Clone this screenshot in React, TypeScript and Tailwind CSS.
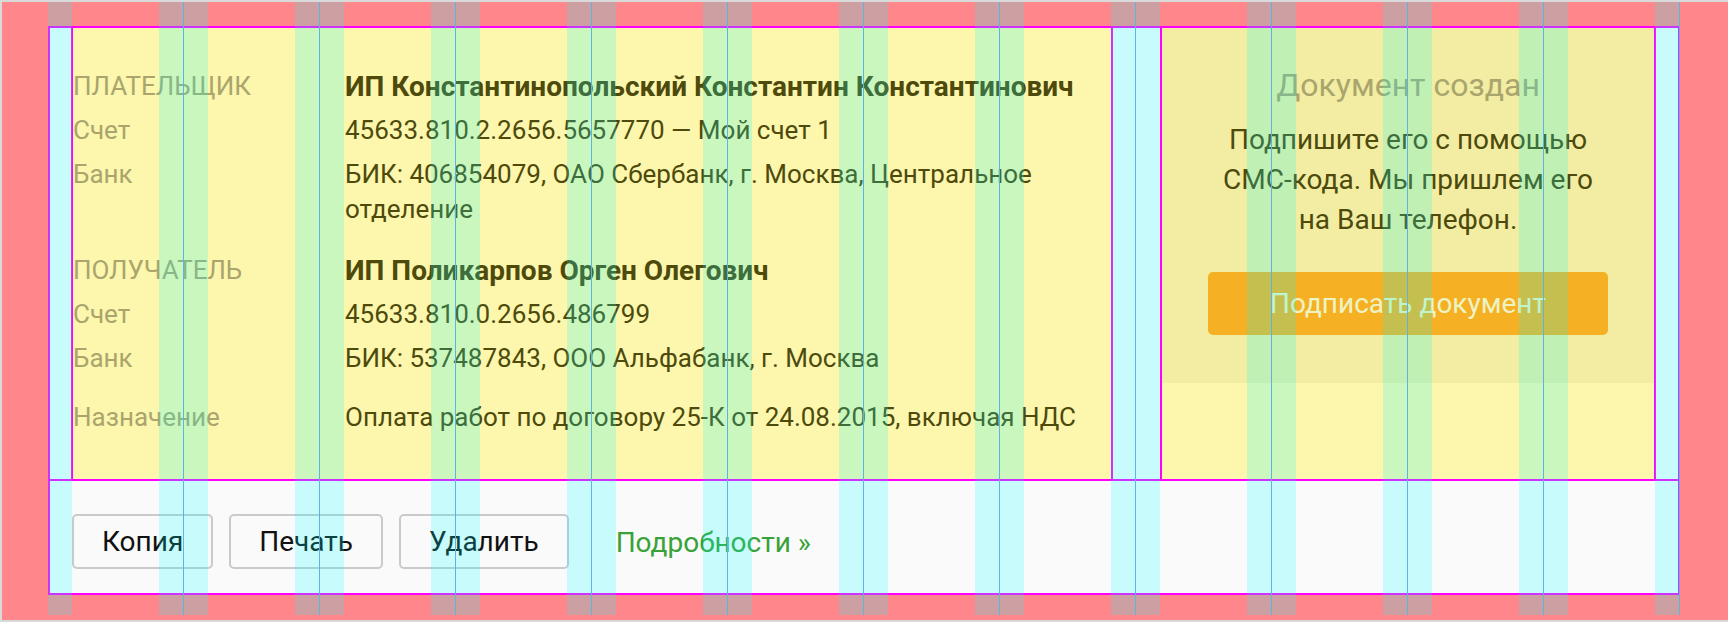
import React from 'react';

type Row = {
  label: string;
  value: string;
  head?: boolean;
};

const payer: Row[] = [
  { label: 'ПЛАТЕЛЬЩИК', value: 'ИП Константинопольский Константин Константинович', head: true },
  { label: 'Счет', value: '45633.810.2.2656.5657770 — Мой счет 1' },
  { label: 'Банк', value: 'БИК: 406854079, ОАО Сбербанк, г. Москва, Центральное отделение' },
];

const payee: Row[] = [
  { label: 'ПОЛУЧАТЕЛЬ', value: 'ИП Поликарпов Орген Олегович', head: true },
  { label: 'Счет', value: '45633.810.0.2656.486799' },
  { label: 'Банк', value: 'БИК: 537487843, ООО Альфабанк, г. Москва' },
];

const InfoRow: React.FC<{ row: Row }> = ({ row }) => (
  <div className="mb-[9px] flex leading-[35px]">
    <div className="w-[272px] shrink-0 text-[26px] text-[#a9a56c]">{row.label}</div>
    <div className={row.head ? 'text-[28px] font-bold text-[#4d4a0c]' : 'text-[26px] text-[#4d4a0c]'}>{row.value}</div>
  </div>
);

const FooterButton: React.FC<{ children: React.ReactNode }> = ({ children }) => (
  <button className="h-[55px] rounded-[5px] border-2 border-[#cacaca] bg-[#fafafa] px-[28px] text-[28px] text-[#111]">
    {children}
  </button>
);

// сетка 12 колонок поверх макета
const GridOverlay = () => (
  <div className="pointer-events-none absolute left-[46px] top-0 grid h-[613px] w-[1632px] grid-cols-12">
    {Array.from({ length: 12 }).map((_, i) => (
      <div key={i} className="flex justify-between border-r border-[#5fb3e3]">
        <div className="w-6 bg-[rgba(0,255,255,0.2)]" />
        <div className="w-6 bg-[rgba(0,255,255,0.2)]" />
      </div>
    ))}
  </div>
);

export default function App() {
  return (
    <div className="relative h-[622px] w-[1728px] overflow-hidden border-y-2 border-l-2 border-[#d9d9d9] bg-[#ff878c] font-['Roboto',sans-serif]">
      <div className="ml-[46px] mt-[24px] w-[1632px] border-2 border-[#ff00ff] bg-[#fafafa]">
        <div className="flex h-[453px] border-b-2 border-[#ff00ff] pl-[21px] pr-[22px]">
          <div className="flex w-[1042px] flex-col border-x-2 border-[#ff00ff] bg-[#fdf6ad] pt-[41px]">
            <div className="mb-[17px] flex flex-col">
              {payer.map((r) => (
                <InfoRow key={r.label} row={r} />
              ))}
            </div>
            <div className="mb-[15px] flex flex-col">
              {payee.map((r) => (
                <InfoRow key={r.label} row={r} />
              ))}
            </div>
            <InfoRow row={{ label: 'Назначение', value: 'Оплата работ по договору 25-К от 24.08.2015, включая НДС' }} />
          </div>
          <div className="ml-[47px] w-[496px] border-x-2 border-[#ff00ff] bg-[#fdf6ad]">
            <div className="flex h-[355px] flex-col items-center bg-[#f2eda2] px-4 pt-[37px] text-center">
              <div className="text-[32px] leading-[40px] text-[#a9a56c]">Документ создан</div>
              <p className="mt-[15px] w-[400px] text-[28px] leading-[40px] text-[#4d4a0c]">
                Подпишите его с помощью СМС-кода. Мы пришлем его на Ваш телефон.
              </p>
              <button className="mt-[32px] h-[63px] w-[400px] rounded-[5px] bg-[#f6b023] text-[28px] text-[#eef3c4]">
                Подписать документ
              </button>
            </div>
          </div>
        </div>
        <div className="flex h-[112px] items-start gap-[16px] pl-[22px] pt-[33px]">
          <FooterButton>Копия</FooterButton>
          <FooterButton>Печать</FooterButton>
          <FooterButton>Удалить</FooterButton>
          <a className="ml-[31px] self-start pt-[11px] text-[28px] leading-[35px] text-[#38a238]">Подробности »</a>
        </div>
      </div>
      <GridOverlay />
    </div>
  );
}
